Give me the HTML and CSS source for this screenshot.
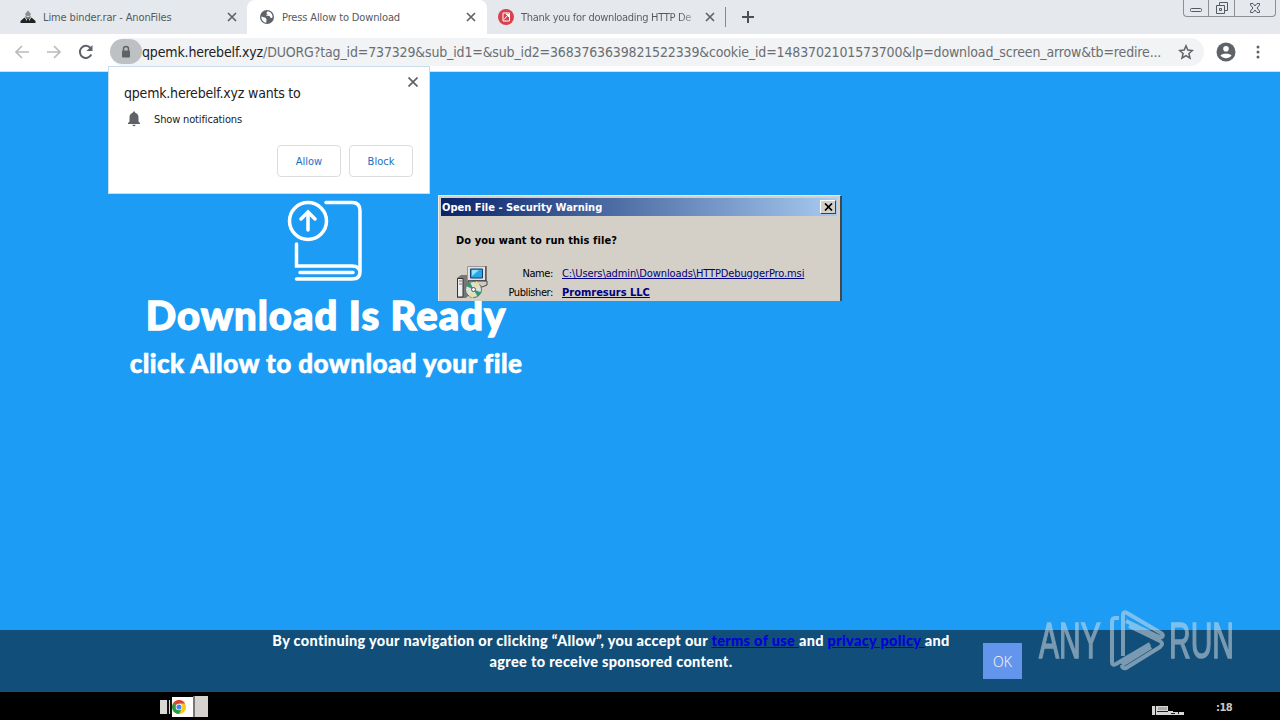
FILE: index.html
```html
<!DOCTYPE html>
<html lang="en">
<head>
  <meta charset="UTF-8" />
  <meta name="viewport" content="width=device-width, initial-scale=1.0" />
  <title>Press Allow to Download</title>
  <link rel="stylesheet" href="styles.css">
</head>
<body>

  <div class="tabs">
    <div class="tab tab-first">
      <svg class="favicon" viewBox="0 0 16 16"><path d="M8 1.500l3 3.500-1 2H6L5 5z" fill="#8b8f93"/><path d="M.5 14v-2l4-3.500L7 12V8h2v4l2.500-3.500 4 3.500v2z" fill="#222"/><path d="M5 7l3 1 3-1-1 3H6z" fill="#777"/></svg>
      <span class="tab-title">Lime binder.rar - AnonFiles</span>
      <svg class="close" viewBox="0 0 10 10"><path d="M1 1l8 8M9 1L1 9"/></svg>
    </div>
    <div class="tab active">
      <svg class="favicon" viewBox="0 0 16 16"><circle cx="8" cy="8" r="7" fill="#5f6368"/><path d="M2.300 7.500l4.200 1.200 1 1.600-.2 3.500C4.400 13.500 2.300 11 2.300 7.500zM8.500 2.200l-1.300 2 1.500 1.100-2 1.300 3.800.3 1.200 2 1.400.1.500-1.500C13.300 4.500 11 2.400 8.500 2.200z" fill="#fff"/></svg>
      <span class="tab-title">Press Allow to Download</span>
      <svg class="close" viewBox="0 0 10 10"><path d="M1 1l8 8M9 1L1 9"/></svg>
    </div>
    <div class="tab tab-last">
      <svg class="favicon" viewBox="0 0 16 16"><circle cx="8" cy="8" r="8" fill="#d9414e"/><path d="M8.500 4H5v8h3M8 4h3.500v8H7.500M6 10.500L10.500 5.500M8 5.500h2.500V8" fill="none" stroke="#fff" stroke-width="1"/></svg>
      <span class="tab-title fade">Thank you for downloading HTTP De</span>
      <svg class="close" viewBox="0 0 10 10"><path d="M1 1l8 8M9 1L1 9"/></svg>
    </div>
    <span class="tab-divider"></span>
    <svg class="new-tab" viewBox="0 0 12 12"><path d="M6 0v12M0 6h12"/></svg>
    <div class="win-controls">
      <span class="win-btn"><svg width="14" height="14" viewBox="0 0 14 14"><rect x="1.500" y="7.500" width="11" height="3" rx="1"/></svg></span>
      <span class="win-btn restore"><svg width="14" height="14" viewBox="0 0 14 14"><path d="M4.500 4.500v-3h8v8h-3M1.500 4.500h8v8h-8zM4.500 7.500h2v2h-2z"/></svg></span>
      <span class="win-btn win-close"><svg width="14" height="14" viewBox="0 0 14 14"><path d="M2.500 2.500h2.500l2 2.500 2-2.500h2.500v1.500L9 7l2.500 3v1.500H9L7 9l-2 2.500H2.500V10L5 7 2.500 4z"/></svg></span>
    </div>
  </div>

  <div class="toolbar">
    <svg class="nav-icon muted" viewBox="0 0 16 16"><path d="M15 8H2M8 2L2 8l6 6"/></svg>
    <svg class="nav-icon muted" viewBox="0 0 16 16"><path d="M1 8h13M8 2l6 6-6 6"/></svg>
    <svg class="nav-icon" viewBox="0 0 16 16"><path d="M13.300 10.500A6 6 0 1 1 12.500 4" stroke-width="2"/><path d="M14.500 1v6h-6z" fill="#5f6368" stroke="none"/></svg>
    <div class="address">
      <span class="lock"><svg width="12" height="14" viewBox="0 0 12 14"><path d="M3.500 6V4a2.500 2.500 0 0 1 5 0v2" fill="none" stroke="#5f6368" stroke-width="1.500"/><rect x="2" y="5.500" width="8" height="7" rx="1" fill="#5f6368"/></svg></span>
      <span class="url"><b>qpemk.herebelf.xyz</b>/DUORG?tag_id=737329&amp;sub_id1=&amp;sub_id2=3683763639821522339&amp;cookie_id=1483702101573700&amp;lp=download_screen_arrow&amp;tb=redire...</span>
      <svg class="star" viewBox="0 0 16 16"><path d="M8 1.800l1.800 4.300 4.600.4-3.500 3 1.100 4.600-4-2.500-4 2.500 1.100-4.600-3.500-3 4.600-.4z"/></svg>
    </div>
    <svg class="avatar" viewBox="0 0 20 20"><circle cx="10" cy="10" r="9.500" fill="#5f6368"/><circle cx="10" cy="6.800" r="2.800" fill="#fff"/><path d="M4.500 13.500c1-2.200 10-2.200 11 0-2.600 3.500-8.400 3.500-11 0z" fill="#fff"/></svg>
    <svg class="menu" viewBox="0 0 4 16"><circle cx="2" cy="3" r="1.500"/><circle cx="2" cy="8" r="1.500"/><circle cx="2" cy="13" r="1.500"/></svg>
  </div>

  <main class="page">
    <section class="hero">
      <svg class="book" viewBox="0 0 76 84"><circle cx="21" cy="22" r="18.500"/><path d="M21 31V14M14 20l7-7 7 7M39 3.500h26q8 0 8 8V73q0 7-8 7H9.500M9.500 45v22H65q8 0 8 7M13 73.500h53"/></svg>
      <h1>Download Is Ready</h1>
      <h2>click Allow to download your file</h2>
    </section>
    <footer class="consent">
      <p><span class="line">By continuing your navigation or clicking “Allow”, you accept our <a href="#">terms of use </a>and <a href="#">privacy policy </a>and</span><span class="line">agree to receive sponsored content.</span></p>
      <button class="ok">OK</button>
    </footer>
  </main>

  <div class="taskbar">
    <div class="task-icons">
      <span class="task-edge"></span>
      <span class="task-chrome"><svg width="14" height="14" viewBox="0 0 16 16"><circle cx="8" cy="8" r="8" fill="#fbc51b"/><path d="M8 8L1.100 4A8 8 0 0 1 14.900 4H8z" fill="#dc4234"/><path d="M8 8L1.100 4A8 8 0 0 0 8 16l3-6z" fill="#23994b"/><circle cx="8" cy="8" r="3.800" fill="#fff"/><circle cx="8" cy="8" r="2.900" fill="#4285e8"/></svg></span>
      <span class="task-block"></span>
    </div>
    <svg class="tray" width="34" height="11" viewBox="0 0 34 11"><path d="M0 1h16v5h5v1h11v3H0z" fill="#d6d6d6"/><path d="M3.500 1v9M5 6.500h11M19 8.500h4M26.500 7v2" stroke="#222"/><path d="M6 2h9v3H6z" fill="#aaa"/></svg>
    <span class="clock">:18</span>
  </div>

  <div class="permission">
    <svg class="close" viewBox="0 0 10 10"><path d="M.5.500l9 9M9.500.500l-9 9"/></svg>
    <p class="origin">qpemk.herebelf.xyz wants to</p>
    <div class="request">
      <svg width="14" height="16" viewBox="0 0 14 16"><path d="M7 .5c.8 0 1.200.5 1.200 1.300C10.500 2.400 11.500 4.300 11.500 6.500V10.500L13 12v1H1v-1l1.500-1.500v-4c0-2.200 1-4.100 3.300-4.700C5.800 1 6.200.5 7 .5zM5.500 13.800h3a1.500 1.500 0 0 1-3 0z" fill="#5f6368"/></svg>
      <span>Show notifications</span>
    </div>
    <div class="actions">
      <button>Allow</button>
      <button>Block</button>
    </div>
  </div>

  <div class="dialog">
    <div class="dialog-title">
      <span>Open File - Security Warning</span>
      <button><svg width="9" height="8" viewBox="0 0 9 8"><path d="M1 .5l7 7M8 .5l-7 7" stroke="#000" stroke-width="1.700"/></svg></button>
    </div>
    <div class="dialog-body">
      <p class="question">Do you want to run this file?</p>
      <div class="file">
        <svg class="installer" width="32" height="34" viewBox="0 0 32 34">
          <path d="M1 13l4-3h8v20l-3 3H1z" fill="#777"/><path d="M1.500 13.500H7V32H1.500z" fill="#eee" stroke="#333"/><path d="M3 16h3M3 19h3" stroke="#777"/>
          <path d="M11.500 1.500h18v14h-18z" fill="#e4e0d8" stroke="#999"/><path d="M30 1v15H12" fill="none" stroke="#222"/><path d="M14.500 4h12v9h-12z" fill="#27a7e8" stroke="#123d77"/><path d="M16 11V5h7z" fill="#8be6f5"/>
          <path d="M17 16h14v4l-5 2h-9z" fill="#d0ccc4" stroke="#444"/>
          <circle cx="17.500" cy="24.500" r="8" fill="#d9e3db" stroke="#666"/><path d="M17.500 24.500L10 21l4-4zM17.500 24.500l8 3-4 4z" fill="#329a6c"/><path d="M17.500 24.500L20 16l4 3zM17.500 24.500L13 31l4 2z" fill="#e9dda1"/><circle cx="17.500" cy="24.500" r="2" fill="#fff" stroke="#555"/>
        </svg>
        <dl>
          <dt>Name:</dt><dd><a class="path" href="#">C:\Users\admin\Downloads\HTTPDebuggerPro.msi</a></dd>
          <dt>Publisher:</dt><dd><a class="publisher" href="#">Promresurs LLC</a></dd>
        </dl>
      </div>
    </div>
  </div>

  <div class="watermark">
    <span class="word any">ANY</span>
    <svg width="56" height="62" viewBox="0 0 56 62"><path d="M10 8H6q-3 0-3 4v40q0 4 4 2l34-20M14 46V5q0-4 4-2l34 20q3 2 1 4-2 1-5-1L17 11M13 55q0 4 4 3l34-21q4-3 0-6L20 16M13 55L42 37"/></svg>
    <span class="word run">RUN</span>
  </div>

</body>
</html>
```
FILE: styles.css
```css
* {
  box-sizing: border-box;
}

body {
  margin: 0;
  width: 1280px;
  height: 720px;
  overflow: hidden;
  position: relative;
  display: flex;
  flex-direction: column;
  background: #000;
  font-family: "DejaVu Sans Condensed", "DejaVu Sans", sans-serif;
  font-stretch: condensed;
  font-size: 11px;
}

p, h1, h2, dl, dd {
  margin: 0;
}

button {
  font: inherit;
  padding: 0;
}

svg {
  flex: none;
}

span {
  white-space: nowrap;
}

/* tab strip */
.tabs {
  display: flex;
  height: 34px;
  background: #e5e9ed;
  color: #55595e;
  letter-spacing: -0.13px;
}

.tab {
  display: flex;
  align-items: center;
  height: 34px;
  width: 240px;
  padding: 0 11px 0 12px;
}

.tab-first {
  width: 247px;
  padding: 0 10px 0 20px;
}

.tab.active {
  background: #fff;
  border-radius: 8px 8px 0 0;
}

.tab-last {
  width: 238px;
  padding: 0 10px 0 11px;
}

.favicon {
  width: 16px;
  height: 16px;
  margin-right: 7px;
}

.tab-title {
  flex: 1;
}

.fade {
  color: transparent;
  background: linear-gradient(90deg, #55595e 86%, #c8ccd0 97%);
  -webkit-background-clip: text;
  background-clip: text;
  letter-spacing: -0.3px;
}

.close {
  width: 10px;
  height: 10px;
  fill: none;
  stroke: #5f6368;
  stroke-width: 1.7;
}

.tab-divider {
  width: 1px;
  height: 20px;
  margin: 7px 16px 0 0;
  background: #85898d;
}

.new-tab {
  width: 12px;
  height: 12px;
  margin-top: 11px;
  stroke: #4c5054;
  stroke-width: 2;
}

.win-controls {
  display: flex;
  height: 17px;
  margin: 0 4px 0 auto;
  border: 1px solid #8b9095;
  border-top: 0;
  border-radius: 0 0 4px 4px;
}

.win-btn {
  width: 24px;
  display: flex;
  align-items: center;
  justify-content: center;
  fill: none;
  stroke: #555a60;
}

.win-btn + .win-btn {
  width: 26px;
  border-left: 1px solid #8b9095;
}

.win-btn + .win-close {
  width: 41px;
}

/* toolbar */
.toolbar {
  display: flex;
  align-items: center;
  height: 38px;
  padding: 0 20px 2px 14px;
  background: #fff;
  border-bottom: 1px solid #c5e3f5;
}

.nav-icon {
  width: 16px;
  height: 16px;
  margin-right: 16px;
  fill: none;
  stroke: #5f6368;
  stroke-width: 1.7;
}

.nav-icon.muted {
  stroke: #b9bbbd;
}

.address {
  display: flex;
  align-items: center;
  width: 1094px;
  height: 28px;
  border-radius: 14px;
  background: #f1f3f4;
}

.lock {
  display: flex;
  align-items: center;
  justify-content: center;
  width: 32px;
  height: 25px;
  border-radius: 13px;
  background: #bdc1c3;
}

.url {
  flex: 1;
  font-size: 14px;
  letter-spacing: -0.155px;
  color: #6a6e73;
}

.url b {
  font-weight: normal;
  color: #202124;
}

.star {
  width: 16px;
  height: 16px;
  margin-right: 10px;
  fill: none;
  stroke: #5f6368;
  stroke-width: 1.5;
}

.avatar {
  width: 20px;
  height: 20px;
  margin-left: 12px;
}

.menu {
  width: 4px;
  height: 16px;
  margin-left: auto;
  fill: #5f6368;
}

/* page */
.page {
  display: flex;
  flex-direction: column;
  height: 620px;
  background: #1c9cf4;
  font-family: Lato, sans-serif;
  color: #fff;
}

.hero {
  flex: 1;
  width: 652px;
  padding-top: 127px;
  text-align: center;
}

.book {
  display: block;
  width: 76px;
  height: 84px;
  margin-left: 287px;
  fill: none;
  stroke: #fff;
  stroke-width: 3.5;
  stroke-linecap: round;
}

h1 {
  height: 67px;
  line-height: 65px;
  font-size: 40px;
  font-weight: 900;
  letter-spacing: 1px;
  -webkit-text-stroke: 1.3px #fff;
}

h2 {
  line-height: 27px;
  font-size: 26px;
  font-weight: 900;
  letter-spacing: 0.45px;
  -webkit-text-stroke: 0.6px #fff;
}

.consent {
  display: flex;
  height: 62px;
  padding-left: 261px;
  background: #114f7a;
}

.consent p {
  width: 700px;
  text-align: center;
  font-size: 14.5px;
  font-weight: 900;
  line-height: 21px;
  letter-spacing: 0.33px;
}

.line {
  display: block;
}

.consent a {
  color: #0000dc;
}

.ok {
  width: 39px;
  height: 36px;
  margin: 13px 0 0 22px;
  border: 0;
  background: #6495ed;
  color: #fff;
  font: 300 14px "Open Sans", sans-serif;
}

/* taskbar */
.taskbar {
  display: flex;
  height: 28px;
  padding-left: 160px;
}

.task-icons {
  display: flex;
  align-items: center;
  height: 29px;
}

.task-edge {
  width: 12px;
  height: 14px;
  background: #d9d9d6;
  border-right: 5px double #111;
}

.task-chrome {
  display: flex;
  align-items: center;
  width: 21px;
  height: 20px;
  background: #fff;
}

.task-block {
  width: 15px;
  height: 21px;
  background: #d6d3ce;
  border-left: 2px solid #777;
}

.tray {
  margin: 13px 30px 0 944px;
}

.clock {
  padding-top: 9px;
  font: bold 11px "DejaVu Sans Condensed", sans-serif;
  letter-spacing: -0.5px;
  color: #ccc8c0;
}

/* notification prompt */
.permission {
  position: absolute;
  left: 108px;
  top: 66px;
  width: 322px;
  height: 128px;
  padding: 16px 16px 0 15px;
  background: #fff;
  border: 1px solid #c9ddeb;
  color: #202124;
  letter-spacing: -0.15px;
}

.permission .close {
  position: absolute;
  right: 11px;
  top: 10px;
}

.origin {
  font-size: 14px;
  line-height: 20px;
  letter-spacing: -0.2px;
}

.request {
  display: flex;
  align-items: center;
  height: 16px;
  gap: 13px;
  margin: 8px 0 0 3px;
}

.actions {
  display: flex;
  justify-content: flex-end;
  gap: 8px;
  margin-top: 18px;
}

.actions button {
  width: 64px;
  height: 32px;
  border: 1px solid #dadce0;
  border-radius: 4px;
  background: #fff;
  color: #1a6fc4;
}

/* file warning */
.dialog {
  position: absolute;
  left: 438px;
  top: 195px;
  width: 404px;
  height: 106px;
  padding: 2px 3px 0 2px;
  background: #d4d0c8;
  border: 1px solid #ece9e2;
  border-right: 2px solid #404850;
  border-bottom: 0;
  overflow: hidden;
  color: #000;
}

.dialog-title {
  display: flex;
  align-items: center;
  justify-content: space-between;
  height: 18px;
  padding: 0 1px;
  background: linear-gradient(90deg, #0a246a, #a6caf0);
  color: #fff;
  font-weight: bold;
}

.dialog-title button {
  display: flex;
  align-items: center;
  justify-content: center;
  width: 16px;
  height: 14px;
  border: 1px solid;
  border-color: #fff #404040 #404040 #fff;
  background: #d4d0c8;
}

.dialog-body {
  padding: 18px 0 0 15px;
}

.question {
  font-weight: bold;
  line-height: 14px;
  letter-spacing: 0.08px;
}

.file {
  display: flex;
  margin-top: 17px;
}

.file dl {
  display: grid;
  grid-template-columns: 65px auto;
  column-gap: 9px;
  line-height: 19px;
  margin-top: -1px;
}

.file dt {
  text-align: right;
  letter-spacing: -0.4px;
}

.file a {
  color: #000080;
}

.path {
  letter-spacing: -0.11px;
}

.publisher {
  font-weight: bold;
}

/* corner logo */
.watermark {
  position: absolute;
  left: 1039px;
  top: 610px;
  display: flex;
  align-items: center;
  opacity: 0.5;
  color: #e0e5e8;
}

.watermark svg {
  margin: 0 4px 0 8px;
  fill: none;
  stroke: #e0e5e8;
  stroke-width: 4;
  stroke-linejoin: round;
}

.word {
  display: block;
  width: 62px;
  font: 50px "Liberation Sans", sans-serif;
  -webkit-text-stroke: 1.5px #e0e5e8;
  transform: scaleX(0.6);
  transform-origin: left;
}
```
